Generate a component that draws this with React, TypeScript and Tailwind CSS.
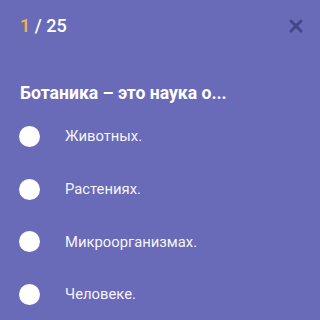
import { X } from 'lucide-react';

const options = ['Животных.', 'Растениях.', 'Микроорганизмах.', 'Человеке.'];

export default function App() {
  return (
    <div className="w-[320px] h-[320px] overflow-hidden flex flex-col bg-[#6a6bb8] font-['Roboto',sans-serif]">
      <div className="h-[2px] bg-[#3b3b55]" />
      <div className="flex items-center justify-between pl-[20px] pr-[14px] pt-[13px] h-[38px]">
        <div className="text-[18px] font-medium text-white">
          <span className="text-[#f2b53a]">1</span> / 25
        </div>
        <X className="w-[20px] h-[20px] text-[#45468a]" strokeWidth={3.5} />
      </div>
      <div className="pl-[20px] pt-[43px] text-[17.6px] font-bold text-white leading-[24px]">
        Ботаника – это наука о...
      </div>
      <div className="flex flex-col pt-[5px]">
        {options.map((o) => (
          <div key={o} className="flex items-center h-[52.7px] pl-[19px]">
            <div className="w-[21px] h-[21px] rounded-full bg-white" />
            <span className="ml-[25px] text-[14.8px] text-white/95">{o}</span>
          </div>
        ))}
      </div>
      <div className="flex-1" />
      <div className="h-[4px] bg-[#8a8bd0]" />
    </div>
  );
}
